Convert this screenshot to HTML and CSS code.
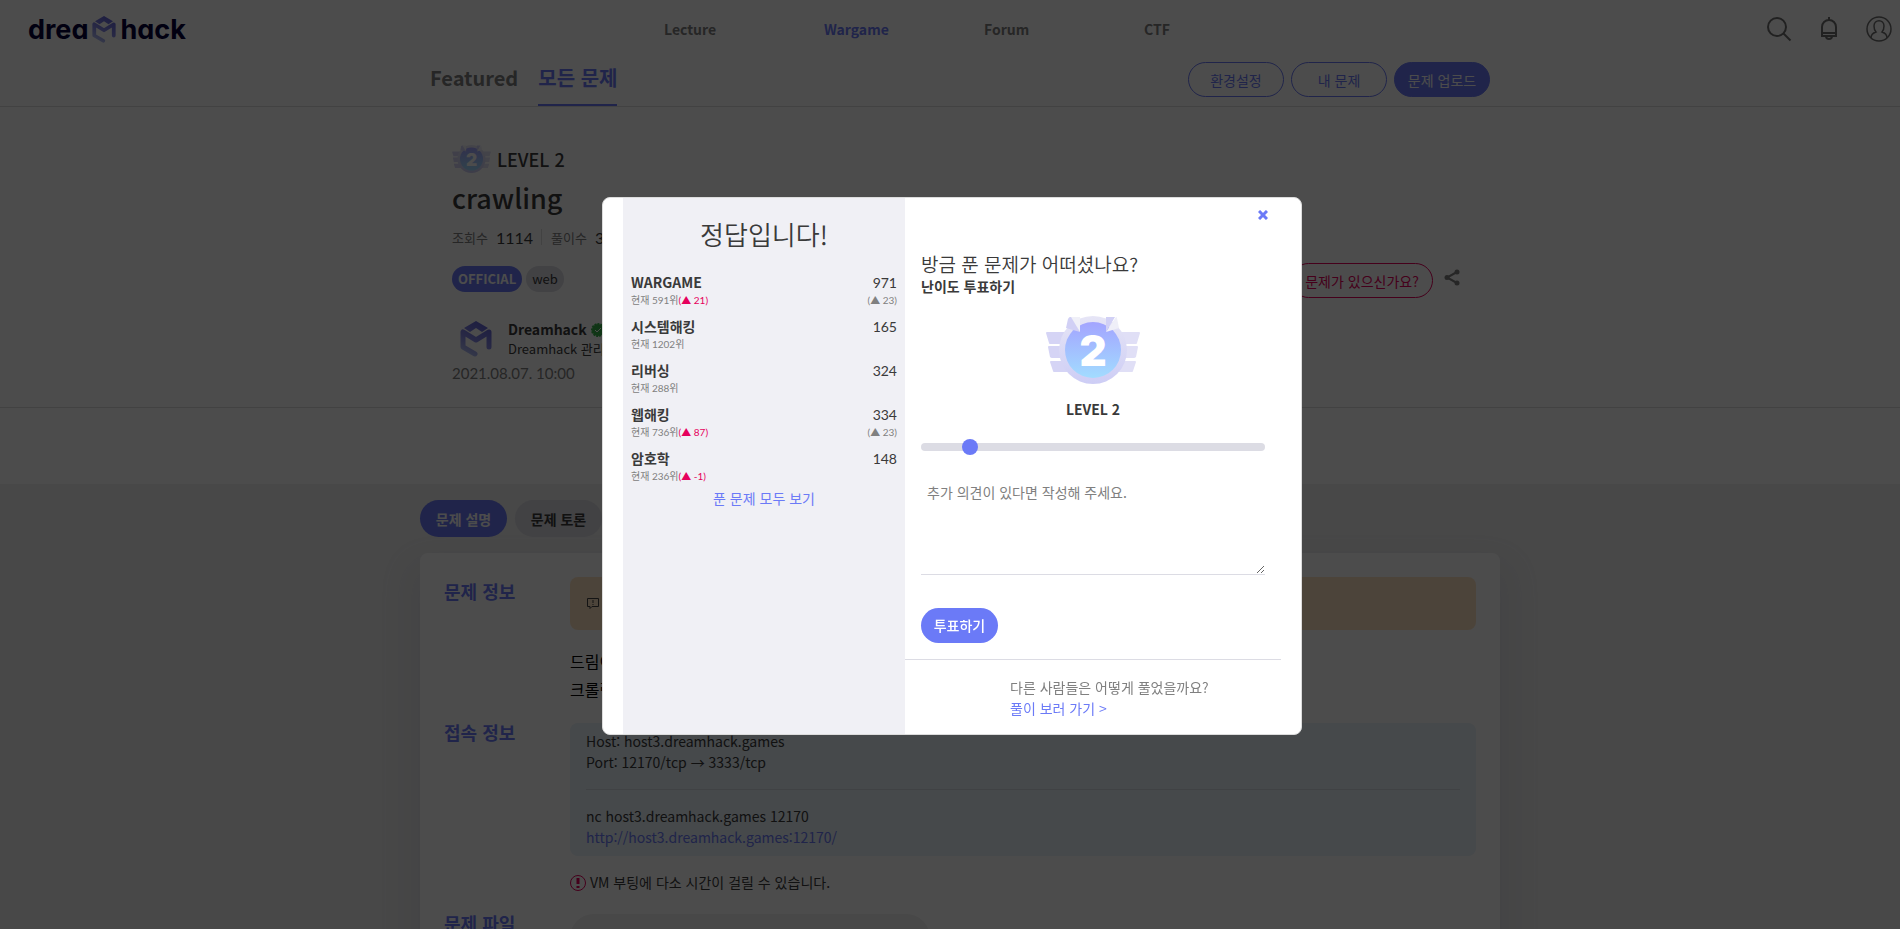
FILE: index.html
```html
<!DOCTYPE html>
<html lang="ko">
<head>
    <meta charset="UTF-8">
    <meta name="viewport" content="width=device-width, initial-scale=1.0">
    <title>crawling | Dreamhack</title>
    <link rel="stylesheet" href="styles.css">
</head>
<body>
    <svg class="defs" width="0" height="0" aria-hidden="true">
        <defs>
            <linearGradient id="ball" x1="0" y1="0" x2="0" y2="1">
                <stop offset="0" stop-color="#a3a4ff"/>
                <stop offset="1" stop-color="#a2dcff"/>
            </linearGradient>
            <linearGradient id="ring" x1="0" y1="0" x2="0" y2="1">
                <stop offset="0" stop-color="#e6e5f6"/>
                <stop offset="1" stop-color="#cdcdf5"/>
            </linearGradient>
            <linearGradient id="cube" gradientUnits="userSpaceOnUse" x1="24" y1="4" x2="8" y2="36">
                <stop offset="0" stop-color="#6667d8"/>
                <stop offset="0.5" stop-color="#8587e6"/>
                <stop offset="1" stop-color="#b8c6f5"/>
            </linearGradient>
            <symbol id="badge" viewBox="0 0 94 68">
                <path fill="#d5d4f5" d="M1 16h19v12H4q-1 0-1-1L0 17q0-1 1-1zM3 30h17v12H6q-1 0-2-1L2 31q0-1 1-1zM5 45h18v11H8q-1 0-1-1L4 46q0-1 1-1z"/>
                <path fill="#e0dff6" d="M93 16H74v12h16q1 0 1-1l3-10q0-1-1-1zM91 30H74v12h14q1 0 2-1l2-10q0-1-1-1zM89 45H71v11h15q1 0 1-1l3-9q0-1-1-1z"/>
                <path fill="#fff" d="M3 28h12v2H3zM5 42h10v3H5zM80 28h12v2H80zM79 42h11v3H79z"/>
                <circle cx="47" cy="34" r="34" fill="url(#ring)"/>
                <circle cx="47" cy="34" r="28" fill="url(#ball)"/>
                <path fill="#d1d0f5" d="M24 1h3l7 15-14-4 2-9q1-2 2-2z"/>
                <path fill="#f0f0f8" d="M25 1h9v15z"/>
                <path fill="#d1d0f5" d="M69 1h-9v15z"/>
                <path fill="#efeff8" d="M70 1l-10 15 13-4-2-10q0-1-1-1z"/>
                <text x="47" y="50" text-anchor="middle" class="badge-num">2</text>
            </symbol>
            <symbol id="logo-cube" viewBox="0 0 32 36">
                <path fill="url(#cube)" d="M16 0l12 7-6 4-6-4-6 4-6-4z"/>
                <path fill="none" stroke="url(#cube)" stroke-width="5" stroke-linejoin="round" stroke-linecap="round" d="M29 26V11l-13 8L3 11v15l12 7"/>
            </symbol>
        </defs>
    </svg>

    <div class="page">
        <header class="header">
            <a class="logo" href="#" aria-label="dreamhack">
                <span>drea</span>
                <svg class="logo-mark" width="24" height="27"><use href="#logo-cube"/></svg>
                <span>hack</span>
            </a>
            <nav class="main-nav">
                <a href="#">Lecture</a>
                <a class="active" href="#">Wargame</a>
                <a href="#">Forum</a>
                <a href="#">CTF</a>
            </nav>
            <div class="header-icons">
                <button aria-label="검색">
                    <svg width="26" height="26" viewBox="0 0 26 26"><circle cx="11" cy="11" r="9"/><path d="M17.5 17.5l7 7"/></svg>
                </button>
                <button aria-label="알림">
                    <svg width="26" height="26" viewBox="0 0 26 26"><path d="M13 1v3M6 20v-9a7 7 0 0 1 14 0v9zM6 17h14M10 20a3 3 0 0 0 6 0"/></svg>
                </button>
                <button aria-label="내 프로필">
                    <svg class="thin" width="26" height="26" viewBox="0 0 26 26"><circle cx="13" cy="13" r="12"/><path d="M5 22c0-4 2-5 5-6-2-2-2-4-2-6 0-7 10-7 10 0 0 2 0 4-2 6 3 1 5 2 5 6"/></svg>
                </button>
            </div>
        </header>

        <div class="sub-header">
            <div class="container sub-inner">
                <nav class="tabs">
                    <a href="#">Featured</a>
                    <a class="active" href="#">모든 문제</a>
                </nav>
                <div class="sub-buttons">
                    <button class="btn">환경설정</button>
                    <button class="btn">내 문제</button>
                    <button class="btn btn-fill">문제 업로드</button>
                </div>
            </div>
        </div>

        <section class="summary">
            <div class="container summary-inner">
                <div class="summary-info">
                    <div class="level">
                        <svg width="39" height="28"><use href="#badge"/></svg>
                        <span>LEVEL 2</span>
                    </div>
                    <h1>crawling</h1>
                    <div class="stats">
                        <span>조회수</span><b>1114</b>
                        <i></i>
                        <span>풀이수</span><b>3</b>
                    </div>
                    <div class="tags">
                        <span class="tag tag-official">OFFICIAL</span>
                        <span class="tag">web</span>
                    </div>
                    <div class="author">
                        <svg width="32" height="36"><use href="#logo-cube"/></svg>
                        <div>
                            <div class="author-name">
                                Dreamhack
                                <svg width="14" height="14" viewBox="0 0 14 14"><circle cx="7" cy="7" r="6" fill="#37b34a" stroke="#37b34a" stroke-width="2" stroke-dasharray="2 1"/><path d="M4 7l2 2 4-4" fill="none" stroke="#fff" stroke-width="1"/></svg>
                            </div>
                            <div class="author-role">Dreamhack 관리자</div>
                        </div>
                    </div>
                    <div class="date">2021.08.07. 10:00</div>
                </div>
                <div class="summary-actions">
                    <button class="btn btn-report">문제가 있으신가요?</button>
                    <button class="share" aria-label="공유">
                        <svg width="16" height="17" viewBox="0 0 16 17"><path d="M13 3L3 8.500l10 5.500" fill="none" stroke="#808080" stroke-width="2"/><g fill="#808080"><circle cx="13" cy="3" r="2.500"/><circle cx="3" cy="8.500" r="2.500"/><circle cx="13" cy="14" r="2.500"/></g></svg>
                    </button>
                </div>
            </div>
        </section>

        <main class="content">
            <div class="container">
                <div class="pills">
                    <button class="pill active">문제 설명</button>
                    <button class="pill">문제 토론</button>
                </div>
                <div class="card">
                    <h2>문제 정보</h2>
                    <div class="card-body">
                        <div class="alert">
                            <svg width="14" height="13" viewBox="0 0 14 13" fill="none" stroke="#444"><path d="M1.5 1.500h11v8H6l-2 2v-2H1.500zM7 3v3M7 7v1"/></svg>
                        </div>
                        <p>드림이는 웹 크롤링 사이트를 구축했습니다.<br>크롤링 사이트에서 취약점을 찾고 flag를 획득하세요!</p>
                    </div>
                    <h2>접속 정보</h2>
                    <div class="card-body">
                        <div class="server">
                            <div>Host: host3.dreamhack.games</div>
                            <div>Port: 12170/tcp → 3333/tcp</div>
                            <hr>
                            <div>nc host3.dreamhack.games 12170</div>
                            <a href="#">http://host3.dreamhack.games:12170/</a>
                        </div>
                        <div class="notice">
                            <svg width="16" height="16" viewBox="0 0 16 16" fill="none" stroke="#e6005c"><circle cx="8" cy="8" r="7.500"/><path d="M8 3v6M8 11v2" stroke-width="3"/></svg>
                            <span>VM 부팅에 다소 시간이 걸릴 수 있습니다.</span>
                        </div>
                    </div>
                    <h2>문제 파일</h2>
                    <div class="card-body">
                        <button class="download" aria-label="문제 파일 받기"></button>
                    </div>
                </div>
            </div>
        </main>
    </div>

    <div class="overlay">
        <div class="modal" role="dialog" aria-label="정답입니다!">
            <div class="result">
                <h3>정답입니다!</h3>
                <ul class="ranks">
                    <li>
                        <div><strong>WARGAME</strong><small>현재 591위<em>(▲ 21)</em></small></div>
                        <div class="score"><span>971</span><small>(▲ 23)</small></div>
                    </li>
                    <li>
                        <div><strong>시스템해킹</strong><small>현재 1202위</small></div>
                        <div class="score"><span>165</span></div>
                    </li>
                    <li>
                        <div><strong>리버싱</strong><small>현재 288위</small></div>
                        <div class="score"><span>324</span></div>
                    </li>
                    <li>
                        <div><strong>웹해킹</strong><small>현재 736위<em>(▲ 87)</em></small></div>
                        <div class="score"><span>334</span><small>(▲ 23)</small></div>
                    </li>
                    <li>
                        <div><strong>암호학</strong><small>현재 236위<em>(▲ -1)</em></small></div>
                        <div class="score"><span>148</span></div>
                    </li>
                </ul>
                <a class="all-link" href="#">푼 문제 모두 보기</a>
            </div>
            <div class="vote">
                <button class="close" aria-label="닫기">
                    <svg width="10" height="10" viewBox="0 0 10 10"><path d="M1 1l8 8M9 1l-8 8" stroke="#6b7af7" stroke-width="3"/></svg>
                </button>
                <form class="vote-form">
                    <h4>방금 푼 문제가 어떠셨나요?</h4>
                    <label class="vote-label" for="level">난이도 투표하기</label>
                    <div class="vote-level">
                        <svg width="94" height="68"><use href="#badge"/></svg>
                        <span>LEVEL 2</span>
                    </div>
                    <input type="range" id="level" min="1" max="9" value="2">
                    <textarea aria-label="추가 의견" placeholder="추가 의견이 있다면 작성해 주세요."></textarea>
                    <button type="button" class="btn-vote">투표하기</button>
                </form>
                <div class="writeup">
                    <p>다른 사람들은 어떻게 풀었을까요?</p>
                    <a href="#">풀이 보러 가기 &gt;</a>
                </div>
            </div>
        </div>
    </div>
</body>
</html>
```

FILE: styles.css
```css
* {
    box-sizing: border-box;
}
body {
    margin: 0;
    height: 100vh;
    overflow: hidden;
    font-family: 'Noto Sans CJK KR', sans-serif;
    font-size: 14px;
    line-height: 21px;
    color: #3a3a3a;
    background: #fff;
}
h1, h2, h3, h4, p, ul {
    margin: 0;
    padding: 0;
}
a {
    color: #6b7af7;
    text-decoration: none;
}
button {
    font-family: inherit;
    font-size: 14px;
    padding: 0;
    border: none;
    background: none;
    cursor: pointer;
}
svg {
    display: block;
}
.defs {
    position: absolute;
}
.badge-num {
    font-family: Inter, sans-serif;
    font-size: 42px;
    font-weight: 900;
    fill: #fff;
}
.page {
    width: calc(100% + 20px);
    height: 100vh;
    overflow: hidden;
}
.container {
    max-width: 1080px;
    margin: 0 auto;
}

/* header */
.header {
    display: flex;
    align-items: center;
    justify-content: space-between;
    height: 58px;
    padding: 0 28px;
}
.logo {
    display: flex;
    align-items: center;
    gap: 4px;
    width: 636px;
    font-family: Inter, sans-serif;
    font-size: 27px;
    font-weight: 700;
    font-feature-settings: "cv11";
    color: #06003a;
}
.main-nav {
    display: grid;
    grid-template-columns: repeat(4, 160px);
    flex: 1;
}
.main-nav a {
    color: #808080;
    font-weight: 700;
}
.main-nav a.active {
    color: #6b7af7;
}
.header-icons {
    display: flex;
    gap: 24px;
}
.header-icons svg {
    fill: none;
    stroke: #707070;
    stroke-width: 2;
}
.header-icons svg.thin {
    stroke-width: 1.5;
}
.sub-header {
    border-bottom: 1px solid #dcdcdc;
}
.sub-inner {
    display: flex;
    justify-content: space-between;
    padding: 0 10px;
    height: 48px;
}
.tabs {
    display: flex;
    gap: 20px;
    font-size: 20px;
    font-weight: 700;
    line-height: 40px;
}
.tabs a {
    color: #808080;
}
.tabs a.active {
    color: #6b7af7;
    border-bottom: 2px solid #6b7af7;
}
.sub-buttons {
    display: flex;
    gap: 7px;
    padding-top: 4px;
}
.btn {
    width: 96px;
    height: 35px;
    border: 1px solid #6b7af7;
    border-radius: 18px;
    color: #6b7af7;
}
.btn-fill {
    background: #6b7af7;
    color: #fff;
}

/* challenge summary */
.summary {
    border-bottom: 1px solid #dcdcdc;
}
.summary-inner {
    display: flex;
    justify-content: space-between;
    padding: 38px 40px 23px 32px;
}
.level {
    display: flex;
    align-items: center;
    gap: 6px;
    height: 28px;
    font-size: 18px;
    font-weight: 500;
}
h1 {
    font-size: 27px;
    line-height: 38px;
    font-weight: 500;
    margin-top: 6px;
}
.stats {
    display: flex;
    align-items: center;
    margin-top: 10px;
    height: 20px;
    font-size: 13px;
    color: #808080;
}
.stats b {
    margin-left: 8px;
    font-family: Lato, sans-serif;
    font-size: 16px;
    font-weight: 400;
    color: #3a3a3a;
}
.stats i {
    width: 1px;
    height: 16px;
    margin: 0 9px 0 8px;
    background: #dcdcdc;
}
.tags {
    display: flex;
    gap: 4px;
    margin-top: 19px;
}
.tag {
    padding: 0 6px;
    border-radius: 13px;
    font-size: 13px;
    line-height: 26px;
    background: #dcdce4;
}
.tag-official {
    background: #6b7af7;
    color: #fff;
    font-weight: 700;
}
.author {
    display: flex;
    align-items: center;
    gap: 16px;
    margin-top: 28px;
    padding-left: 8px;
    line-height: 19px;
}
.author-name {
    display: flex;
    align-items: center;
    gap: 4px;
    font-weight: 700;
}
.author-role {
    font-size: 13px;
}
.date {
    margin-top: 5px;
    font-family: Lato, sans-serif;
    font-size: 15px;
    color: #808080;
}
.summary-actions {
    display: flex;
    align-items: flex-start;
    gap: 11px;
    padding-top: 118px;
}
.btn-report {
    width: 142px;
    border-color: #e6005c;
    color: #e6005c;
}
.share {
    margin-top: 6px;
}

/* content */
.content {
    margin-top: 76px;
    padding-top: 16px;
    background: #f0f0f0;
}
.pills {
    display: flex;
    gap: 8px;
    margin-bottom: 16px;
}
.pill {
    width: 87px;
    height: 37px;
    border-radius: 19px;
    background: #dcdce4;
    color: #3a3a3a;
    font-weight: 700;
}
.pill.active {
    background: #6b7af7;
    color: #fff;
}
.card {
    display: grid;
    grid-template-columns: 126px 1fr;
    padding: 24px;
    border-radius: 8px;
    background: #fff;
    box-shadow: 0 20px 30px 10px rgba(150, 150, 180, 0.15);
}
.card h2 {
    font-size: 18px;
    line-height: 18px;
    color: #6b7af7;
}
.card h2:first-child {
    margin-top: 5px;
}
.alert {
    display: flex;
    align-items: center;
    height: 53px;
    padding: 0 16px;
    border-radius: 8px;
    background: #ffe4c4;
}
.card-body p {
    margin: 17px 0 20px;
    font-size: 16px;
    line-height: 28px;
    color: #000;
}
.server {
    padding: 8px 16px;
    border-radius: 8px;
    background: #e9f3fa;
}
.server hr {
    margin: 16px 0;
    border: none;
    border-top: 1px solid #d5dde5;
}
.notice {
    display: flex;
    align-items: center;
    gap: 4px;
    margin: 16px 0 21px;
}
.download {
    width: 360px;
    height: 48px;
    border-radius: 24px;
    background: #f0f0f0;
}

/* modal */
.overlay {
    position: fixed;
    inset: 0;
    display: flex;
    align-items: center;
    justify-content: center;
    padding: 2px 0 0 4px;
    background: rgba(0, 0, 0, 0.7);
}
.modal {
    display: grid;
    grid-template-columns: 282px 1fr;
    width: 700px;
    padding: 0 20px;
    border: 1px solid #dcdcdc;
    border-radius: 8px;
    background: #fff;
}
.result {
    padding: 16px 8px;
    background: #f0f0f5;
    text-align: center;
}
.result h3 {
    font-size: 26px;
    font-weight: 350;
    line-height: 40px;
    margin-bottom: 18px;
}
.ranks {
    list-style: none;
    text-align: left;
}
.ranks li {
    display: flex;
    justify-content: space-between;
    height: 44px;
}
.ranks li:last-child {
    height: 40px;
}
.ranks strong, .ranks small, .score span {
    display: block;
}
.ranks strong {
    font-weight: 700;
}
.ranks small {
    font-family: Lato, 'Noto Sans CJK KR', sans-serif;
    font-size: 10px;
    line-height: 15px;
    color: #808080;
}
.ranks em {
    font-style: normal;
    color: #e6005c;
}
.score {
    text-align: right;
}
.score span {
    font-family: Lato, sans-serif;
}
.vote {
    display: flex;
    flex-direction: column;
}
.close {
    align-self: flex-end;
    margin: 12px 13px 0 0;
}
.vote-form {
    display: flex;
    flex-direction: column;
    padding: 30px 16px 16px;
}
.vote h4 {
    font-size: 19px;
    line-height: 28px;
    font-weight: 350;
}
.vote-label {
    font-weight: 700;
    line-height: 16px;
}
.vote-level {
    display: flex;
    flex-direction: column;
    align-items: center;
    gap: 15px;
    margin-top: 22px;
    font-weight: 700;
}
.vote input {
    appearance: none;
    width: 100%;
    height: 8px;
    margin: 23px 0 0;
    border-radius: 4px;
    background: #dcdce4;
}
.vote input::-webkit-slider-thumb {
    appearance: none;
    width: 16px;
    height: 16px;
    border-radius: 50%;
    background: #6b7af7;
}
.vote textarea {
    height: 97px;
    margin-top: 27px;
    padding: 4px 6px;
    border: none;
    border-bottom: 1px solid #dcdce4;
    font: inherit;
}
.vote textarea::placeholder {
    color: #808080;
}
.btn-vote {
    align-self: flex-start;
    width: 77px;
    height: 35px;
    margin-top: 33px;
    border-radius: 18px;
    background: #6b7af7;
    color: #fff;
    font-weight: 500;
}
.writeup {
    padding: 17px 0 15px 105px;
    border-top: 1px solid #dcdce4;
    color: #808080;
}
```
